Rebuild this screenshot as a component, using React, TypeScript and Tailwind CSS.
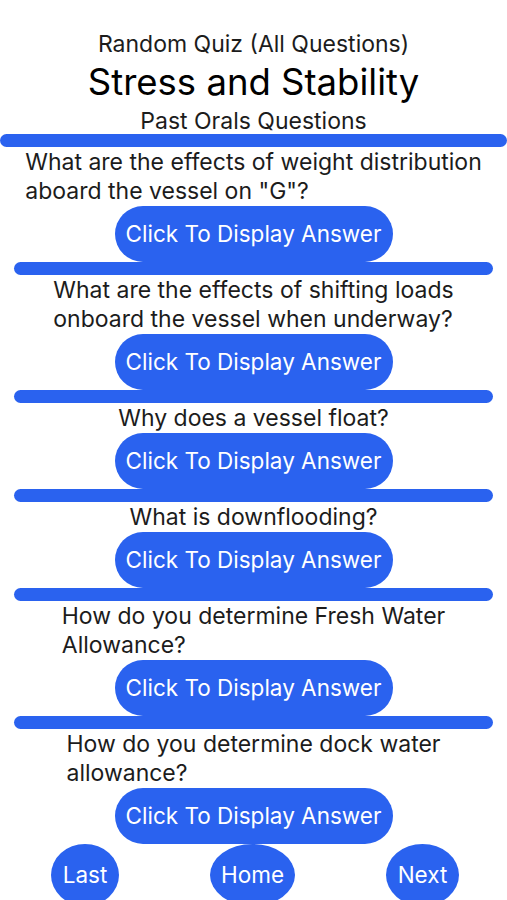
import type { ReactNode } from 'react'

const questions: string[][] = [
  ['What are the effects of weight distribution', 'aboard the vessel on "G"?'],
  ['What are the effects of shifting loads', 'onboard the vessel when underway?'],
  ['Why does a vessel float?'],
  ['What is downflooding?'],
  ['How do you determine Fresh Water', 'Allowance?'],
  ['How do you determine dock water', 'allowance?'],
]

function Divider({ full }: { full?: boolean }) {
  return <div className={`h-[13px] rounded-full bg-[#2a62ef] ${full ? 'mx-0' : 'mx-[14px]'}`} />
}

function Pill({ children, className }: { children: ReactNode; className?: string }) {
  return (
    <button
      className={`flex shrink-0 items-center justify-center bg-[#2a62ef] text-[22.5px] text-white ${className ?? ''}`}
    >
      {children}
    </button>
  )
}

export default function App() {
  return (
    <div
      className="h-[900px] overflow-hidden bg-white text-[#1c1c1c]"
      style={{ fontFamily: 'Inter, "Noto Sans", sans-serif' }}
    >
      <div className="pt-[31px] text-center">
        <div className="text-[23px] leading-[26px]">Random Quiz (All Questions)</div>
        <div className="mt-[5px] text-[36.5px] leading-[40px] text-black">Stress and Stability</div>
        <div className="mt-[6px] text-[23px] leading-[26px]">Past Orals Questions</div>
      </div>
      <Divider full />

      {questions.map((lines, i) => (
        <div key={i}>
          {i > 0 && <Divider />}
          <div className="flex justify-center pt-[1px]">
            <p className="w-fit text-left text-[23px] leading-[29px]">
              {lines.map((l, j) => (
                <span key={j}>
                  {j > 0 && <br />}
                  {l}
                </span>
              ))}
            </p>
          </div>
          <div className="flex justify-center">
            <Pill className="h-[56px] w-[278px] rounded-full">Click To Display Answer</Pill>
          </div>
        </div>
      ))}

      <div className="flex items-start justify-between pl-[51px] pr-[48px]">
        <Pill className="h-[62px] w-[68px] rounded-[50%]">Last</Pill>
        <Pill className="h-[62px] w-[85px] rounded-[50%]">Home</Pill>
        <Pill className="h-[62px] w-[73px] rounded-[50%]">Next</Pill>
      </div>
    </div>
  )
}
